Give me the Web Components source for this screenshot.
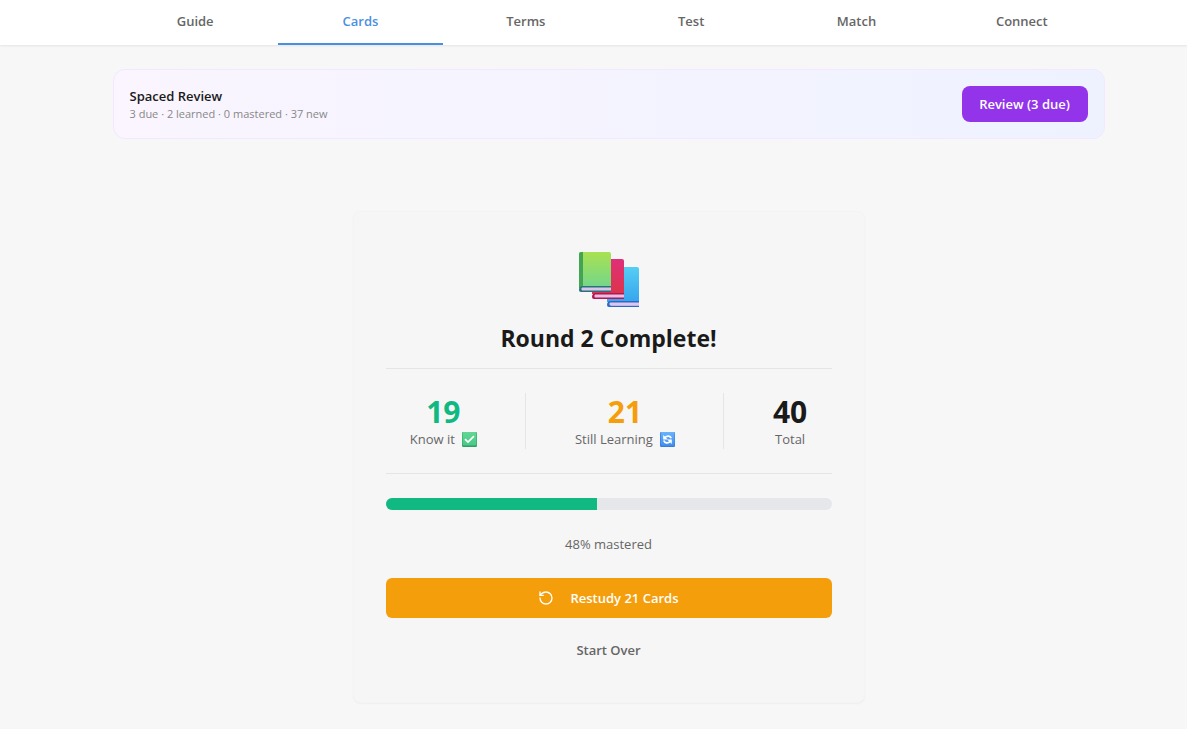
<!DOCTYPE html>
<html lang="en">
<head>
<meta charset="utf-8">
<meta name="viewport" content="width=device-width, initial-scale=1">
<title>Cards</title>
<style>
  html { background: #f7f7f7; }
  body {
    margin: 0;
    font-family: "Open Sans", "Noto Sans", sans-serif;
    font-size: 13px;
    line-height: 20px;
    color: #1a1a1a;
    --muted: #666666;
    --rule: #e5e5e5;
    --gutter: 30px;
    --page: 992px;
  }
</style>
</head>
<body>
<study-app></study-app>

<script>
const define = (name, html) => {
  const template = document.createElement('template');
  template.innerHTML = html;
  customElements.define(name, class extends HTMLElement {
    constructor() {
      super();
      this.attachShadow({ mode: 'open' }).append(template.content.cloneNode(true));
    }
  });
};

define('nav-tabs', `
  <style>
    :host { display: block; background: #fff; padding-left: var(--gutter); box-shadow: 0 1px 2px rgba(0,0,0,.08); }
    nav { display: grid; grid-auto-flow: column; grid-auto-columns: 1fr; max-width: var(--page); margin: 0 auto; }
  </style>
  <nav aria-label="Study modes"><slot></slot></nav>`);

define('nav-tab', `
  <style>
    :host { display: block; }
    a { display: block; padding: 11px 0 12px; border-bottom: 2px solid transparent; text-align: center; font-weight: 600; color: var(--muted); text-decoration: none; }
    :host([active]) a { color: #4a90e2; border-color: #4a90e2; }
  </style>
  <a href="#"><slot></slot></a>`);

define('review-banner', `
  <style>
    :host { display: flex; align-items: center; justify-content: space-between; gap: 16px; padding: 16px; border: 1px solid #f3e8ff; border-radius: 12px; background: linear-gradient(to right, #faf5ff, #eef2ff); }
    h2 { margin: 0; font-size: 13px; line-height: 20px; font-weight: 600; }
    p { margin: 0; font-size: 11px; line-height: 16px; color: #888; }
    button { min-width: 126px; height: 36px; padding: 0 16px; border: 0; border-radius: 8px; background: #9333ea; color: #fff; font: inherit; font-weight: 600; }
  </style>
  <div>
    <h2><slot name="title"></slot></h2>
    <p><slot name="detail"></slot></p>
  </div>
  <button type="button"><slot name="action"></slot></button>`);

define('stat-item', `
  <style>
    :host { display: flex; flex-direction: column; align-items: center; color: #1a1a1a; }
    :host([tone=known]) { color: #10b981; }
    :host([tone=learning]) { color: #f59e0b; }
    .value { padding-top: 2px; font-size: 30px; line-height: 34px; font-weight: 700; }
    .label { display: flex; align-items: center; gap: 7px; color: var(--muted); white-space: nowrap; }
  </style>
  <span class="value"><slot></slot></span>
  <span class="label"><slot name="label"></slot><slot name="icon"></slot></span>`);

define('icon-check', `
  <style>:host, svg { display: block; }</style>
  <svg width="15" height="15" viewBox="0 0 15 15" role="img" aria-label="Known">
    <defs><linearGradient id="g" x1="0" y1="0" x2="0" y2="1"><stop stop-color="#62d793"/><stop offset="1" stop-color="#48c987"/></linearGradient></defs>
    <rect width="15" height="15" rx="1.2" fill="#329d67"/>
    <rect x=".5" width="14" height="13.6" rx="1" fill="url(#g)"/>
    <path d="M3 7.2 6 10.1 12 4.2" fill="none" stroke="#fff" stroke-width="1.7"/>
  </svg>`);

define('icon-cycle', `
  <style>:host, svg { display: block; }</style>
  <svg width="15" height="15" viewBox="0 0 15 15" role="img" aria-label="Learning">
    <defs><linearGradient id="g" x1="0" y1="0" x2="0" y2="1"><stop stop-color="#68b3fb"/><stop offset="1" stop-color="#438ff0"/></linearGradient></defs>
    <rect width="15" height="15" rx="1.2" fill="#397bd8"/>
    <rect x=".7" width="13.8" height="13.8" rx="1" fill="url(#g)"/>
    <g fill="none" stroke="#fff" stroke-width="1.7">
      <path d="M11.2 6.2C10.3 3.8 7.2 3.4 5 5.4"/><path d="M3.8 8.4C4.7 11.2 8 11.6 10 9.7"/>
    </g>
    <path d="M3.2 3v4.6h4.6zM11.8 12V7.4H7.2z" fill="#fff"/>
  </svg>`);

define('icon-books', `
  <style>:host, svg { display: block; }</style>
  <svg width="64" height="64" viewBox="0 0 64 64" role="img" aria-label="Books">
    <defs>
      <linearGradient id="g" x1="0" y1="0" x2="0" y2="1"><stop stop-color="#a9e151"/><stop offset="1" stop-color="#72d68c"/></linearGradient>
      <linearGradient id="r" x1="0" y1="0" x2="0" y2="1"><stop stop-color="#df2f79"/><stop offset="1" stop-color="#dc344a"/></linearGradient>
      <linearGradient id="b" x1="0" y1="0" x2="0" y2="1"><stop stop-color="#55cef4"/><stop offset="1" stop-color="#36a5ed"/></linearGradient>
    </defs>
    <path d="M30 25q0-2 2-2h28q2 0 2 2v33H30z" fill="url(#b)"/>
    <path d="M30 61q0-4 4-4h28v2H34v2.400h28V63H32q-2 0-2-2z" fill="#2c69c6"/>
    <path d="M33 58.500h29v3H33q-1.500-1.500 0-3z" fill="#dfc4ed"/>
    <path d="M15 17q0-2 2-2h28q2 0 2 2v33H15z" fill="url(#r)"/>
    <path d="M15 53q0-4 4-4h28v6H17q-2 0-2-2z" fill="#b41655"/>
    <path d="M18 50.500h29v3H18q-1.500-1.500 0-3z" fill="#e8bfe4"/>
    <path d="M2 10q0-2 2-2h28q2 0 2 2v34H2z" fill="url(#g)"/>
    <path d="M2 10q0-2 2-2h2v36H2z" fill="#43a454"/>
    <path d="M2 46q0-4 4-4h28v6H4q-2 0-2-2z" fill="#26737a"/>
    <path d="M5 43.500h29v3H5q-1.500-1.500 0-3z" fill="#dbc3ea"/>
  </svg>`);

define('icon-restart', `
  <style>:host, svg { display: block; }</style>
  <svg width="16" height="16" viewBox="0 0 24 24" fill="none" stroke="currentColor" stroke-width="2" stroke-linecap="round" stroke-linejoin="round" aria-hidden="true">
    <path d="M3 12a9 9 0 1 0 9-9 9.750 9.750 0 0 0-6.740 2.740L3 8"/><path d="M3 3v5h5"/>
  </svg>`);

define('mastery-bar', `
  <style>
    :host { display: block; }
    .track { height: 12px; border-radius: 6px; background: #e5e7eb; overflow: hidden; }
    .fill { width: 47.5%; height: 100%; background: #10b981; }
    p { margin: 24px 0 0; text-align: center; color: var(--muted); }
  </style>
  <div class="track" role="progressbar" aria-label="Mastered" aria-valuenow="48" aria-valuemin="0" aria-valuemax="100"><div class="fill"></div></div>
  <p><slot></slot></p>`);

define('action-button', `
  <style>
    :host { display: block; }
    button { display: flex; align-items: center; justify-content: center; gap: 16px; width: 100%; height: 40px; padding: 0; border: 0; border-radius: 6px; background: transparent; color: var(--muted); font: inherit; font-weight: 600; }
    :host([primary]) button { background: #f59e0b; color: #fff; }
  </style>
  <button type="button"><slot name="icon"></slot><span><slot></slot></span></button>`);

define('round-summary', `
  <style>
    :host { display: block; box-sizing: border-box; max-width: 512px; margin: 72px auto 24px; padding: 32px; border: 1px solid #f4f4f4; border-radius: 8px; background: #f6f6f6; box-shadow: 0 1px 2px rgba(0,0,0,.04); }
    icon-books { width: 64px; margin: 0 auto; }
    h1 { margin: 0; padding: 14px 0; border-bottom: 1px solid var(--rule); font-size: 23px; line-height: 32px; font-weight: 700; text-align: center; }
    .stats { display: flex; justify-content: space-around; padding: 24px 0; border-bottom: 1px solid var(--rule); }
    .rule { width: 1px; background: var(--rule); }
    mastery-bar { margin: 24px 0; }
    .actions { display: grid; gap: 12px; }
  </style>
  <icon-books></icon-books>
  <h1>Round 2 Complete!</h1>
  <div class="stats">
    <stat-item tone="known">19<span slot="label">Know it</span><icon-check slot="icon"></icon-check></stat-item>
    <span class="rule"></span>
    <stat-item tone="learning">21<span slot="label">Still Learning</span><icon-cycle slot="icon"></icon-cycle></stat-item>
    <span class="rule"></span>
    <stat-item>40<span slot="label">Total</span></stat-item>
  </div>
  <mastery-bar>48% mastered</mastery-bar>
  <div class="actions">
    <action-button primary><icon-restart slot="icon"></icon-restart>Restudy 21 Cards</action-button>
    <action-button>Start Over</action-button>
  </div>`);

define('study-app', `
  <style>
    :host { display: block; }
    main { padding: 24px 0 0 var(--gutter); }
    .page { max-width: var(--page); margin: 0 auto; }
  </style>
  <nav-tabs>
    <nav-tab>Guide</nav-tab><nav-tab active>Cards</nav-tab><nav-tab>Terms</nav-tab>
    <nav-tab>Test</nav-tab><nav-tab>Match</nav-tab><nav-tab>Connect</nav-tab>
  </nav-tabs>
  <main><div class="page">
    <review-banner>
      <span slot="title">Spaced Review</span>
      <span slot="detail">3 due · 2 learned · 0 mastered · 37 new</span>
      <span slot="action">Review (3 due)</span>
    </review-banner>
    <round-summary></round-summary>
  </div></main>`);
</script>
</body>
</html>
